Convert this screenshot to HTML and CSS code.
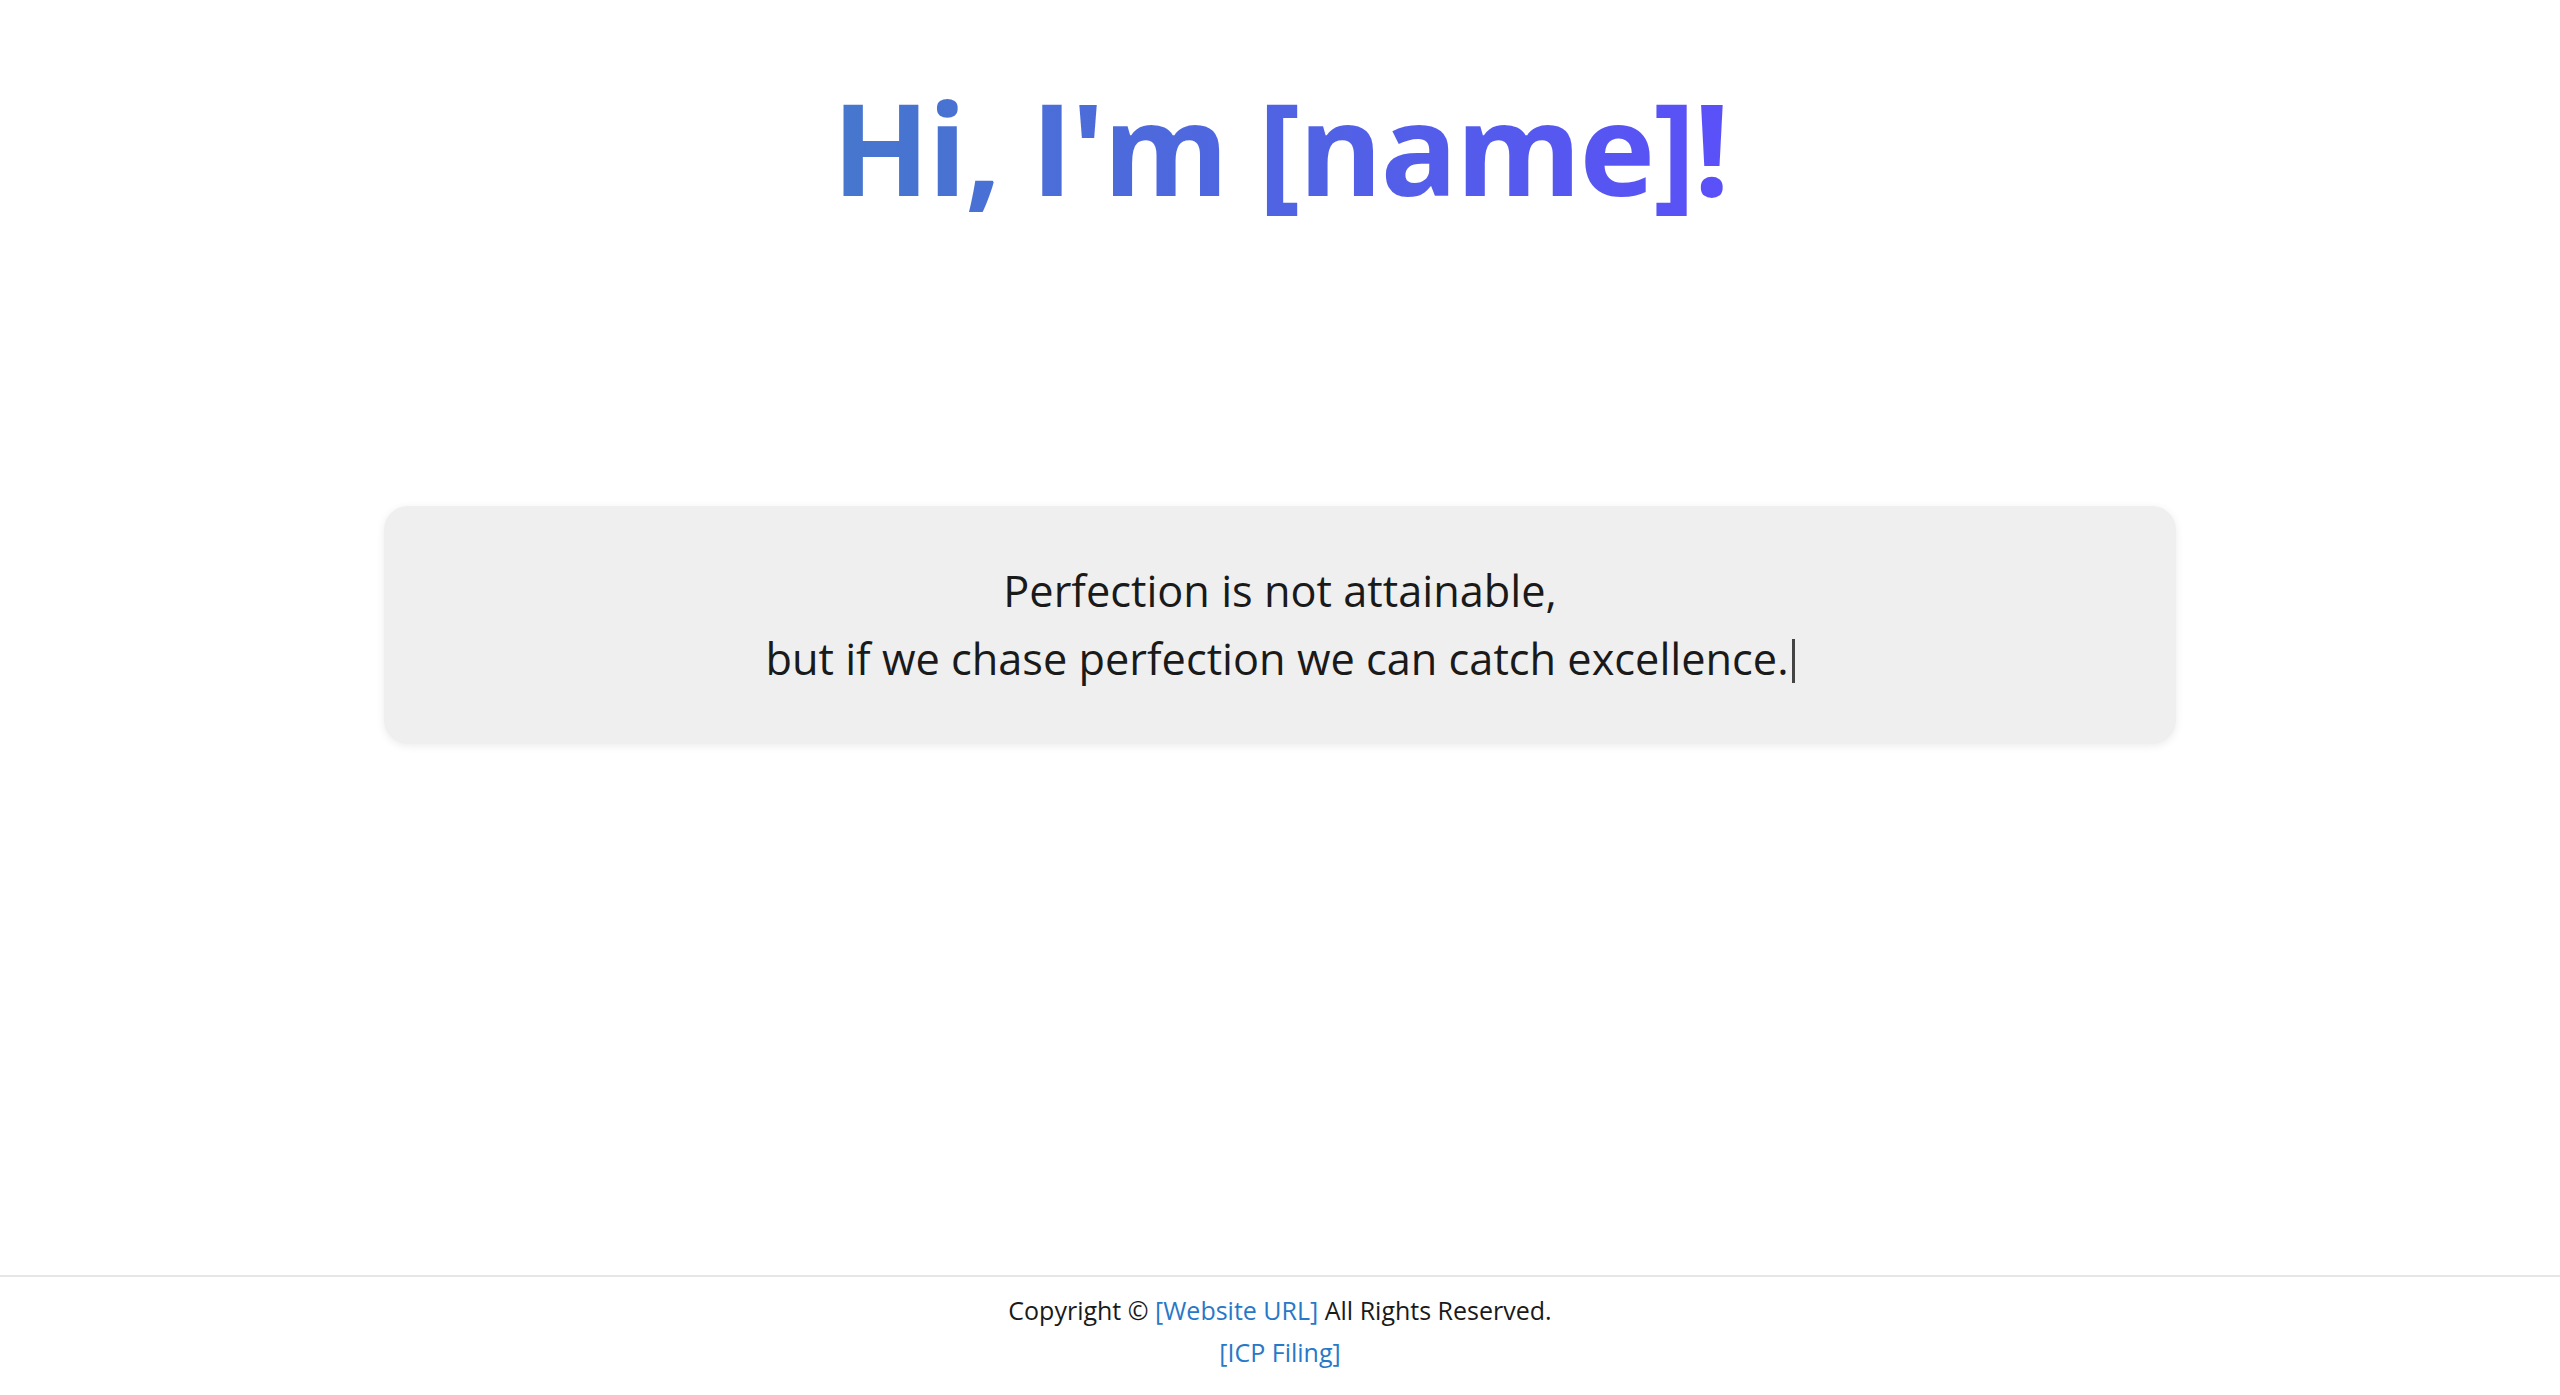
FILE: index.html
```html
<!DOCTYPE html>
<html lang="en">
<head>
<meta charset="utf-8">
<title>Hi, I'm [name]!</title>
<link rel="stylesheet" href="styles.css">
</head>
<body>
<main class="main">
  <h1 class="title">Hi, I'm [name]!</h1>
  <section class="quote-card">
    <p class="quote">Perfection is not attainable,<br>but if we chase perfection we can catch excellence.<span class="cursor"></span></p>
  </section>
</main>
<footer class="footer">
  <p class="footer-line">Copyright © <a class="link" href="#">[Website URL]</a> All Rights Reserved.</p>
  <p class="footer-line"><a class="link" href="#">[ICP Filing]</a></p>
</footer>
</body>
</html>
```
FILE: styles.css
```css
html, body {
  margin: 0;
  padding: 0;
  background: #ffffff;
}
body {
  font-family: "Open Sans", "Noto Sans", sans-serif;
  color: #1a1a1a;
  min-height: 100vh;
  display: flex;
  flex-direction: column;
}
.main {
  flex: 1;
  display: flex;
  flex-direction: column;
  align-items: center;
}
.title {
  margin: 0;
  padding-top: 70px;
  font-size: 128px;
  line-height: 1.2;
  font-weight: 700;
  letter-spacing: -2px;
  background: linear-gradient(90deg, #4677cd 0%, #5a50f8 100%);
  -webkit-background-clip: text;
  background-clip: text;
  color: transparent;
}
.quote-card {
  margin-top: 282px;
  width: 70%;
  box-sizing: border-box;
  padding: 51px 20px;
  background: #efefef;
  border-radius: 24px;
  box-shadow: 0 2px 8px rgba(0, 0, 0, 0.08);
  text-align: center;
}
.quote {
  margin: 0;
  font-size: 43.3px;
  line-height: 68px;
  color: #1a1a1a;
}
.cursor {
  display: inline-block;
  width: 3px;
  height: 44px;
  margin-left: 3px;
  background: #444;
  vertical-align: -8px;
}
.footer {
  border-top: 2px solid #e6e6e6;
  padding: 12px 0 22px;
  text-align: center;
}
.footer-line {
  margin: 0;
  font-size: 25px;
  line-height: 42px;
  color: #1a1a1a;
}
.link {
  color: #2878c8;
  text-decoration: none;
}
```
